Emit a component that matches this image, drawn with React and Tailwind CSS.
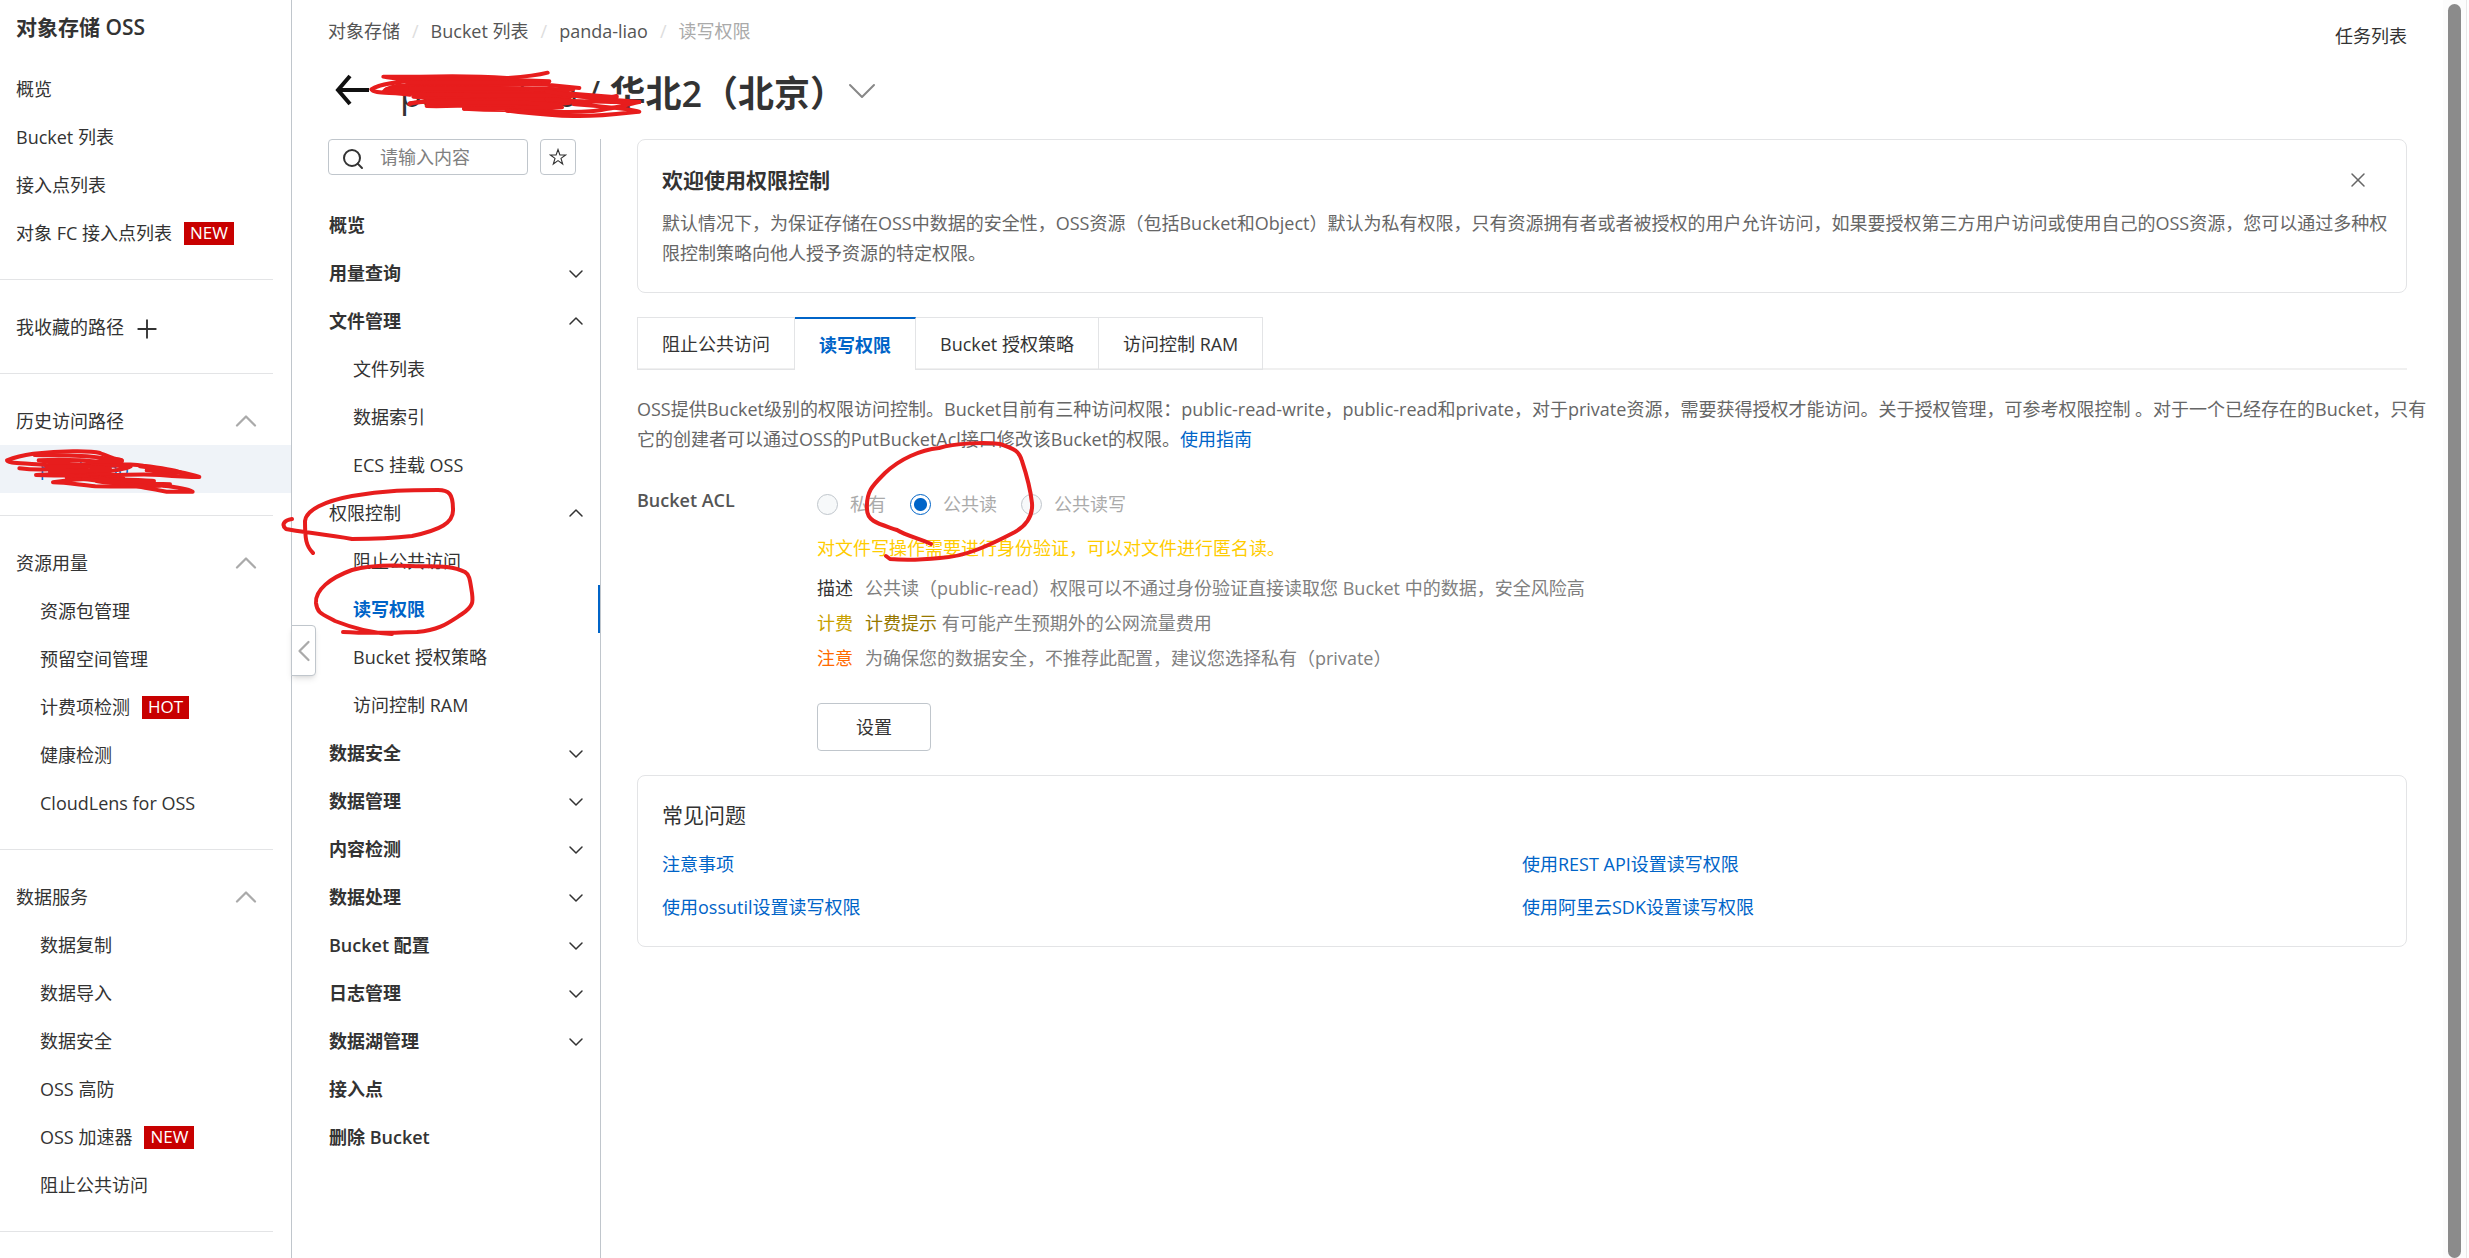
/** Bucket 读写权限页：左侧产品导航 + Bucket 二级导航 + 权限设置内容，含手绘标注。 */

import React, { useState } from 'react';
import { ChevronDown, ChevronLeft, ChevronUp, Plus, Search, X } from 'lucide-react';

const SIDE_GROUPS = [
  {
    items: [
      { label: '概览' },
      { label: 'Bucket 列表' },
      { label: '接入点列表' },
      { label: '对象 FC 接入点列表', badge: 'NEW' },
    ],
  },
  { title: '我收藏的路径', addable: true },
  { title: '历史访问路径', foldable: true, items: [{ label: 'panda-liao', active: true }] },
  {
    title: '资源用量',
    foldable: true,
    items: [
      { label: '资源包管理' },
      { label: '预留空间管理' },
      { label: '计费项检测', badge: 'HOT' },
      { label: '健康检测' },
      { label: 'CloudLens for OSS' },
    ],
  },
  {
    title: '数据服务',
    foldable: true,
    items: [
      { label: '数据复制' },
      { label: '数据导入' },
      { label: '数据安全' },
      { label: 'OSS 高防' },
      { label: 'OSS 加速器', badge: 'NEW' },
      { label: '阻止公共访问' },
    ],
  },
];

const BUCKET_MENU = [
  { label: '概览' },
  { label: '用量查询', fold: 'closed' },
  { label: '文件管理', fold: 'open', children: ['文件列表', '数据索引', 'ECS 挂载 OSS'] },
  {
    label: '权限控制',
    fold: 'open',
    light: true,
    children: ['阻止公共访问', '读写权限', 'Bucket 授权策略', '访问控制 RAM'],
  },
  { label: '数据安全', fold: 'closed' },
  { label: '数据管理', fold: 'closed' },
  { label: '内容检测', fold: 'closed' },
  { label: '数据处理', fold: 'closed' },
  { label: 'Bucket 配置', fold: 'closed' },
  { label: '日志管理', fold: 'closed' },
  { label: '数据湖管理', fold: 'closed' },
  { label: '接入点' },
  { label: '删除 Bucket' },
];

const TABS = ['阻止公共访问', '读写权限', 'Bucket 授权策略', '访问控制 RAM'];

const ACL_OPTIONS = [
  { value: 'private', label: '私有' },
  { value: 'public-read', label: '公共读' },
  { value: 'public-read-write', label: '公共读写' },
];

const FAQ_LINKS = ['注意事项', '使用REST API设置读写权限', '使用ossutil设置读写权限', '使用阿里云SDK设置读写权限'];

function Badge({ children }) {
  return (
    <span className="ml-3 h-[23px] px-[6px] bg-[#c80000] text-white text-[17px] leading-[22px]">
      {children}
    </span>
  );
}

/** 手绘红色标注，盖在内容之上 */
function Mark({ className, viewBox, paths, width = 4 }) {
  return (
    <svg
      className={`absolute z-20 pointer-events-none overflow-visible ${className}`}
      viewBox={viewBox}
      fill="none"
      stroke="#e71d1d"
      strokeWidth={width}
      strokeLinecap="round"
      strokeLinejoin="round"
      aria-hidden="true"
    >
      {paths.map((d) => <path key={d} d={d} />)}
    </svg>
  );
}

function SideNav() {
  return (
    <aside className="relative w-[292px] flex-shrink-0 border-r border-[#c0c6cc]">
      <h2 className="h-[65px] pt-3 pl-4 text-[21px] leading-[30px] font-semibold">对象存储 OSS</h2>
      {SIDE_GROUPS.map((group, i) => (
        <div key={group.title || i}>
          {group.title && (
            <div className="flex items-center h-12 pl-4 pr-[27px]">
              <span>{group.title}</span>
              {group.addable && (
                <button type="button" title="添加" className="ml-2 mt-1">
                  <Plus className="w-[30px] h-[30px]" strokeWidth={1.5} />
                </button>
              )}
              {group.foldable && (
                <button type="button" title="折叠" className="ml-auto">
                  <ChevronUp className="w-9 h-9 text-[#aaa]" strokeWidth={1.5} />
                </button>
              )}
            </div>
          )}
          {(group.items || []).map((item) => (
            <a
              key={item.label}
              href="#"
              className={`relative flex items-center h-12 ${group.title ? 'pl-10' : 'pl-4'} ${
                item.active ? 'bg-[#eff3f8] text-[#0064c8]' : ''
              }`}
            >
              {item.label}
              {item.badge && <Badge>{item.badge}</Badge>}
              {item.active && (
                <Mark
                  className="left-0 -top-1 w-[220px] h-[60px]"
                  viewBox="0 0 660 180"
                  width={12}
                  paths={[
                    'M365 58 C340 54 320 44 300 36 C270 28 180 30 100 38 C70 42 40 50 21 58 C20 66 60 66 110 70 C160 74 200 80 260 84',
                    'M104 42 C180 44 240 42 300 50 C340 56 366 54 366 60 C340 66 280 60 240 58 C200 56 150 56 116 58 C160 66 220 74 280 70 C330 68 380 66 430 74 C480 80 520 86 542 94 C520 98 480 92 440 88',
                    'M58 82 C120 90 180 84 260 76 C320 72 360 74 392 76 C380 84 340 90 280 94 C230 98 160 100 108 102 C180 106 240 100 300 102 C360 104 420 98 480 102 C530 106 570 108 598 108 C570 98 500 86 420 76',
                    'M140 80 C200 92 260 98 330 84 C280 74 200 76 150 76 M150 92 C220 92 270 88 330 90 M190 100 C240 112 320 106 370 112 C320 122 260 104 200 110',
                    'M159 124 C200 118 260 112 320 114 C380 116 430 116 462 120 C420 130 350 112 290 120 C340 130 420 124 510 130 C480 138 400 138 286 136 C240 132 200 124 159 124',
                    'M300 110 C360 128 430 140 500 152 L578 152 C560 142 530 138 490 134 M250 114 C320 122 380 130 440 136',
                  ]}
                />
              )}
            </a>
          ))}
          <hr className="mt-[22px] mb-[23px] mr-[18px] border-[#e3e4e6]" />
        </div>
      ))}
      <button
        type="button"
        title="收起"
        className="absolute z-10 left-[291px] top-[625px] flex items-center justify-center w-[25px] h-[51px] bg-white border border-[#c0c6cc] rounded-r shadow-md"
      >
        <ChevronLeft className="w-9 h-9 flex-shrink-0 text-[#aaa]" strokeWidth={1.5} />
      </button>
    </aside>
  );
}

function BucketNav() {
  return (
    <nav className="w-[273px] flex-shrink-0 border-r border-[#c0c6cc]">
      <div className="flex gap-3 pr-6 mb-[26px]">
        <div className="flex items-center flex-1 min-w-0 h-9 px-3 gap-[15px] border border-[#c0c6cc] rounded">
          <Search className="w-6 h-6 mt-1 flex-shrink-0" strokeWidth={2} />
          <input
            type="text"
            aria-label="搜索"
            placeholder="请输入内容"
            className="w-full min-w-0 outline-none placeholder:text-[#808080]"
          />
        </div>
        <button
          type="button"
          title="收藏"
          className="flex items-center justify-center w-9 h-9 border border-[#c0c6cc] rounded"
        >
          <svg className="w-[18px] h-[18px]" viewBox="0 0 18 18" fill="none" stroke="currentColor" strokeWidth="1.1">
            <path d="M9 1.5 L10.9 7 H16.6 L12 10.4 L13.7 16 L9 12.6 L4.3 16 L6 10.4 L1.4 7 H7.1 Z" />
          </svg>
        </button>
      </div>
      {BUCKET_MENU.map((menu) => (
        <div key={menu.label}>
          <button
            type="button"
            className={`relative flex items-center justify-between w-full h-12 pl-px pr-3 text-left ${
              menu.light ? '' : 'font-semibold'
            }`}
          >
            {menu.label}
            {menu.fold === 'closed' && <ChevronDown className="w-6 h-6 mt-[2px]" strokeWidth={1.5} />}
            {menu.fold === 'open' && <ChevronUp className="w-6 h-6" strokeWidth={1.5} />}
            {menu.light && (
              <Mark
                className="-left-[46px] -top-[3px] w-[174px] h-[80px]"
                viewBox="282 485 174 80"
                paths={[
                  'M292 518 C284 519 281 524 286 528 C300 531 325 533 352 538 C375 538 395 537 412 535 C440 529 454 522 453 508 C453 493 449 489 438 489 C410 489 385 489 352 495 C325 500 306 509 305 520 C305 538 306 545 313 552',
                ]}
              />
            )}
          </button>
          {(menu.children || []).map((child) => (
            <a
              key={child}
              href="#"
              className={`relative flex items-center h-12 pl-[25px] ${
                child === '读写权限' ? 'border-r-2 border-[#0064c8] text-[#0064c8] font-semibold' : ''
              }`}
            >
              {child}
              {child === '读写权限' && (
                <Mark
                  className="-left-[14px] -top-6 w-[162px] h-[84px]"
                  viewBox="314 560 162 84"
                  paths={[
                    'M343 631 C360 632 390 632 417 631 C440 629 448 622 462 613 C474 605 473 600 472 592 C470 580 470 574 465 571 C450 563 430 566 410 565 C390 564 370 564 352 569 C330 577 315 589 316 602 C317 612 322 613 335 620 C355 628 372 632 392 633',
                  ]}
                />
              )}
            </a>
          ))}
        </div>
      ))}
    </nav>
  );
}

function PageHeader() {
  return (
    <header className="h-[139px] pt-4">
      <div className="flex items-start justify-between">
        <nav className="flex leading-[30px] text-[#555]">
          <a href="#">对象存储</a>
          <span className="px-3 text-[#ddd]">/</span>
          <a href="#">Bucket 列表</a>
          <span className="px-3 text-[#ddd]">/</span>
          <a href="#">panda-liao</a>
          <span className="px-3 text-[#ddd]">/</span>
          <span className="text-[#aaa]">读写权限</span>
        </nav>
        <a href="#" className="pt-[5px] leading-[30px]">任务列表</a>
      </div>
      <div className="relative flex items-center h-[92px] -mt-1">
        <button type="button" title="返回" className="ml-[6px] mb-[6px]">
          <svg className="w-[36px] h-[34px]" viewBox="0 0 36 34" fill="none" stroke="#111" strokeWidth="4">
            <path d="M16 3 L4 17 L16 31 M4 17 H35" />
          </svg>
        </button>
        <h1 className="ml-[30px] mt-[2px] text-[36px] font-semibold leading-[54px] whitespace-nowrap">
          <span className="font-medium">panda-liao / </span>
          华北2（北京）
        </h1>
        <button type="button" title="切换" className="-ml-2 mb-1">
          <ChevronDown className="w-12 h-12 text-[#888]" strokeWidth={1} />
        </button>
        <Mark
          className="left-8 top-[13px] w-[300px] h-[64px]"
          viewBox="0 0 900 192"
          width={12}
          paths={[
            'M563 38 C540 44 500 50 440 54 C360 48 260 48 180 50 L70 50 C100 58 150 56 200 60 C140 62 60 70 34 88 C40 102 90 96 150 104',
            'M130 62 C250 54 420 58 568 64 C480 78 260 68 110 78 C90 82 76 88 72 94 C200 86 400 70 560 74 L658 84',
            'M80 88 C200 78 400 84 640 88 C520 100 260 92 110 92 C240 102 430 94 600 98 L770 112 C700 116 640 104 560 104',
            'M110 96 C240 112 420 98 560 104 C420 118 260 104 160 110 C280 122 440 108 630 112 C520 128 260 112 150 130',
            'M140 66 C260 72 420 64 540 70 M150 84 C300 88 420 84 580 88 M160 102 C300 106 420 106 600 106',
            'M148 132 C200 116 400 120 620 120 C500 132 320 124 200 138 C320 142 440 124 630 128 C540 140 430 134 312 146',
            'M200 126 C360 134 460 118 600 136 C520 148 420 144 312 146 C400 152 520 150 606 142',
            'M560 94 C640 110 720 118 838 126 C800 134 740 150 690 154 C620 160 530 152 450 152',
            'M770 108 C740 116 700 122 674 126 C640 124 600 120 560 118',
            'M838 126 C780 128 720 124 640 124 M440 152 C500 158 560 166 640 168 C720 170 790 160 838 155 C820 146 740 140 640 132',
          ]}
        />
      </div>
    </header>
  );
}

function AclForm() {
  const [acl, setAcl] = useState('public-read');
  return (
    <section className="flex mt-8">
      <h3 className="w-[180px] flex-shrink-0 leading-7 font-semibold text-[#555]">Bucket ACL</h3>
      <div>
        <div className="relative flex items-center gap-6 h-9 text-[#aaa]">
          {ACL_OPTIONS.map((o) => (
            <label key={o.value} className="flex items-center gap-3">
              <input
                type="radio"
                name="acl"
                value={o.value}
                checked={acl === o.value}
                onChange={() => setAcl(o.value)}
                className="appearance-none w-[21px] h-[21px] rounded-full border border-[#c0c6cc] bg-[#f7f9fa] checked:border-[#0064c8] checked:bg-[radial-gradient(circle,#0064c8_6px,#fff_7px)]"
              />
              {o.label}
            </label>
          ))}
          <Mark
            className="left-[47px] -top-[43px] w-[170px] h-[120px]"
            viewBox="864 442 170 120"
            paths={[
              'M931 543 C920 538 905 534 897 529 C880 523 867 521 867 508 C866 490 873 484 885 472 C900 458 920 449 939 447 C955 442 985 441 1000 443 C1015 448 1019 450 1022 460 C1027 475 1030 485 1032 502 C1033 515 1027 524 1015 531 C990 544 965 556 940 557 C920 559 900 559 890 558 L886 555',
            ]}
          />
        </div>
        <p className="mt-[11px] leading-[30px] text-[#fc0]">对文件写操作需要进行身份验证，可以对文件进行匿名读。</p>
        <dl className="mt-2 grid grid-cols-[auto_1fr] gap-x-3 leading-[35px] text-[#808080]">
          <dt className="text-[#333]">描述</dt>
          <dd>公共读（public-read）权限可以不通过身份验证直接读取您 Bucket 中的数据，安全风险高</dd>
          <dt className="text-[#c8a000]">计费</dt>
          <dd><a href="#" className="text-[#967800]">计费提示</a> 有可能产生预期外的公网流量费用</dd>
          <dt className="text-[#ff6a00]">注意</dt>
          <dd>为确保您的数据安全，不推荐此配置，建议您选择私有（private）</dd>
        </dl>
        <button type="button" className="mt-[27px] w-[114px] h-12 border border-[#c0c6cc] rounded-sm">
          设置
        </button>
      </div>
    </section>
  );
}

function App() {
  const [activeTab, setActiveTab] = useState('读写权限');
  const [welcome, setWelcome] = useState(true);

  return (
    <div className="flex h-screen overflow-hidden bg-white text-[18px] leading-[30px] text-[#333] font-['Open_Sans','Noto_Sans_CJK_SC',sans-serif]">
      <SideNav />
      <div className="flex-1 min-w-0 flex flex-col px-9">
        <PageHeader />
        <div className="flex flex-1 min-h-0">
          <BucketNav />
          <main className="flex-1 min-w-0 pl-9">
            {welcome && (
              <section className="relative h-[154px] mb-6 pl-6 pr-3 pt-6 border border-[#e3e4e6] rounded-lg">
                <h2 className="text-[21px] leading-8 font-semibold">欢迎使用权限控制</h2>
                <p className="mt-3 text-[#666]">
                  默认情况下，为保证存储在OSS中数据的安全性，OSS资源（包括Bucket和Object）默认为私有权限，只有资源拥有者或者被授权的用户允许访问，如果要授权第三方用户访问或使用自己的OSS资源，您可以通过多种权限控制策略向他人授予资源的特定权限。
                </p>
                <button
                  type="button"
                  title="关闭"
                  onClick={() => setWelcome(false)}
                  className="absolute right-9 top-7"
                >
                  <X className="w-6 h-6 text-[#666]" strokeWidth={1.5} />
                </button>
              </section>
            )}

            <div className="flex border-b-2 border-[#f0f0f0]" role="tablist">
              {TABS.map((t) => (
                <button
                  key={t}
                  type="button"
                  role="tab"
                  aria-selected={activeTab === t}
                  onClick={() => setActiveTab(t)}
                  className={`h-[53px] px-6 -mb-[2px] border-r first:border-l border-[#e3e4e6] ${
                    activeTab === t
                      ? 'border-t-2 border-t-[#0064c8] bg-white text-[#0064c8] font-semibold'
                      : 'border-t border-b'
                  }`}
                >
                  {t}
                </button>
              ))}
            </div>

            <p className="mt-6 -mr-6 text-[#666]">
              OSS提供Bucket级别的权限访问控制。Bucket目前有三种访问权限：public-read-write，public-read和private，对于private资源，需要获得授权才能访问。关于授权管理，可参考权限控制 。对于一个已经存在的Bucket，只有它的创建者可以通过OSS的PutBucketAcl接口修改该Bucket的权限。
              <a href="#" className="text-[#0064c8]">使用指南</a>
            </p>

            <AclForm />

            <section className="mt-6 h-[172px] px-6 pt-[23px] border border-[#e3e4e6] rounded-lg">
              <h2 className="text-[21px] leading-8">常见问题</h2>
              <div className="mt-3 grid grid-cols-2 leading-[43px] text-[#0064c8]">
                {FAQ_LINKS.map((l) => <a key={l} href="#">{l}</a>)}
              </div>
            </section>
          </main>
        </div>
      </div>
      <div className="w-6 mr-[2px] flex-shrink-0 pt-1 pl-[5px] border-r border-[#e8e8e8] bg-[#fcfcfc]">
        <div className="w-[13px] h-full rounded-full bg-[#8b8b8b]" />
      </div>
    </div>
  );
}

export default App;
